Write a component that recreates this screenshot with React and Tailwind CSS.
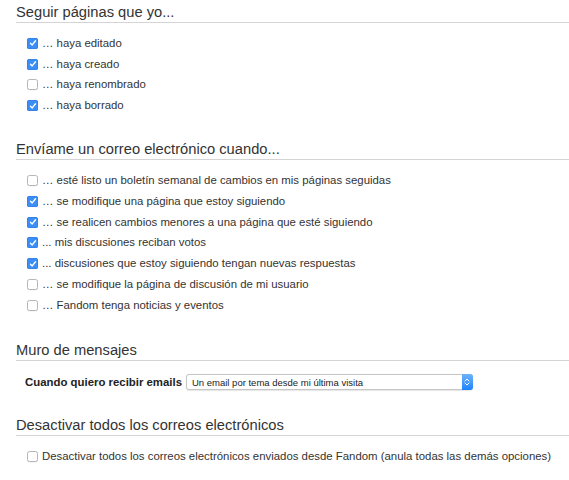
import React from 'react';

function Checkbox({ checked }) {
  if (checked) {
    return (
      <span className="flex h-[11px] w-[11px] shrink-0 items-center justify-center rounded-[2.5px] bg-[#3b8ef5] shadow-[inset_0_0_0_0.5px_#2a78e0]">
        <svg width="8" height="8" viewBox="0 0 8 8">
          <path d="M1.5 4.2 L3.2 5.9 L6.5 1.8" fill="none" stroke="#fff" strokeWidth="1.4" strokeLinecap="round" strokeLinejoin="round" />
        </svg>
      </span>
    );
  }
  return (
    <span className="h-[11px] w-[11px] shrink-0 rounded-[2.5px] border border-[#b5b5b5] bg-white shadow-[0_0.5px_0.5px_rgba(0,0,0,0.08)]" />
  );
}

function SectionTitle({ children }) {
  return (
    <h2 className="ml-4 border-b border-[#d4d4d4] pt-[2px] text-[14.7px] leading-[20px] text-[#333]">
      {children}
    </h2>
  );
}

function Option({ checked, label }) {
  return (
    <label className="flex h-[20.8px] items-center gap-[4px] whitespace-nowrap pl-[27px] text-[11.4px] text-[#333]">
      <Checkbox checked={checked} />
      <span>{label}</span>
    </label>
  );
}

const follow = [
  { checked: true, label: '… haya editado' },
  { checked: true, label: '… haya creado' },
  { checked: false, label: '… haya renombrado' },
  { checked: true, label: '… haya borrado' },
];

const emails = [
  { checked: false, label: '… esté listo un boletín semanal de cambios en mis páginas seguidas' },
  { checked: true, label: '… se modifique una página que estoy siguiendo' },
  { checked: true, label: '… se realicen cambios menores a una página que esté siguiendo' },
  { checked: true, label: '... mis discusiones reciban votos' },
  { checked: true, label: '... discusiones que estoy siguiendo tengan nuevas respuestas' },
  { checked: false, label: '… se modifique la página de discusión de mi usuario' },
  { checked: false, label: '… Fandom tenga noticias y eventos' },
];

export default function App() {
  return (
    <div className="min-h-[480px] bg-white font-['Liberation_Sans',Arial,sans-serif] text-[#333]">
      {/* Seguir páginas */}
      <SectionTitle>Seguir páginas que yo...</SectionTitle>
      <div className="mt-[10px]">
        {follow.map((o) => (
          <Option key={o.label} {...o} />
        ))}
      </div>

      {/* Correo */}
      <div className="mt-[21px]">
        <SectionTitle>Envíame un correo electrónico cuando...</SectionTitle>
        <div className="mt-[10px]">
          {emails.map((o) => (
            <Option key={o.label} {...o} />
          ))}
        </div>
      </div>

      {/* Muro de mensajes */}
      <div className="mt-[22px]">
        <SectionTitle>Muro de mensajes</SectionTitle>
        <div className="mt-[13px] flex items-center gap-[4px] pl-[25px]">
          <span className="whitespace-nowrap text-[11.4px] font-bold text-[#222]">Cuando quiero recibir emails</span>
          <div className="flex h-[16px] w-[287px] items-center rounded-[3px] border border-[#c6c6c6] bg-white shadow-[0_0.5px_1px_rgba(0,0,0,0.1)]">
            <span className="flex-1 whitespace-nowrap pl-[5px] text-[9.5px] leading-none text-[#222]">
              Un email por tema desde mi última visita
            </span>
            <span className="-my-px -mr-px flex h-[16px] w-[11px] items-center justify-center rounded-r-[3px] bg-gradient-to-b from-[#6cb3fa] to-[#1a82fb]">
              <svg width="6" height="10" viewBox="0 0 6 10">
                <path d="M1 4 L3 2 L5 4 M1 6 L3 8 L5 6" fill="none" stroke="#fff" strokeWidth="1" strokeLinecap="round" strokeLinejoin="round" />
              </svg>
            </span>
          </div>
        </div>
      </div>

      {/* Desactivar */}
      <div className="mt-[22px]">
        <SectionTitle>Desactivar todos los correos electrónicos</SectionTitle>
        <div className="mt-[10px]">
          <Option
            checked={false}
            label="Desactivar todos los correos electrónicos enviados desde Fandom (anula todas las demás opciones)"
          />
        </div>
      </div>
    </div>
  );
}
